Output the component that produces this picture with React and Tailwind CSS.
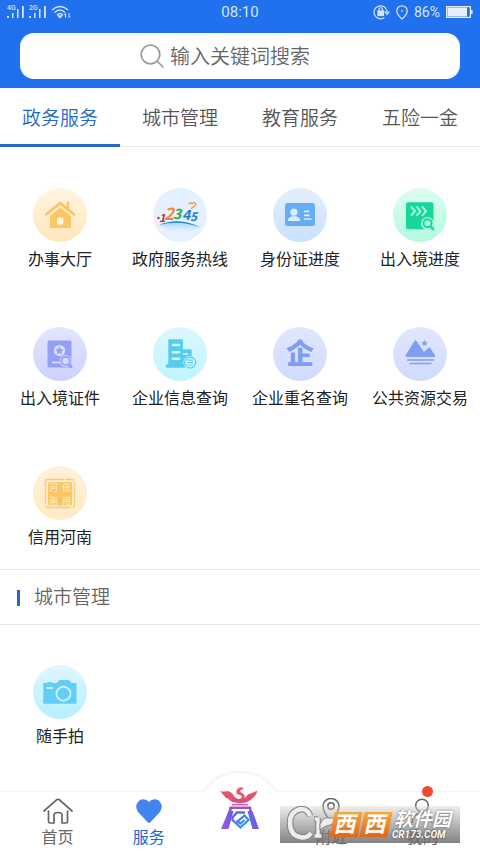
import { useState } from 'react';
import clsx from 'clsx';

const cjk = 'Noto Sans CJK SC, sans-serif';

const HouseIcon = () => (
    <svg viewBox="0 0 54 54" className="w-full h-full" fill="#fbc766" aria-hidden="true">
        <path d="M17 28L27.2 19.5L38 28V38.5Q38 40 36.5 40H18.5Q17 40 17 38.5Z" />
        <path d="M13.3 26.3L27.2 15.2L41 26.3M35 15v5" fill="none" stroke="#fbc766" strokeWidth="2.8" strokeLinecap="round" strokeLinejoin="round" />
        <rect x="24" y="29.5" width="6.4" height="7" rx="1" fill="#fff6e0" />
    </svg>
);

const HotlineIcon = () => (
    <svg viewBox="0 0 54 54" className="w-full h-full" aria-hidden="true">
        <defs>
            <linearGradient id="hill" x1="0" y1="0" x2="0" y2="1">
                <stop offset="0" stopColor="#9ccdf8" />
                <stop offset="1" stopColor="#d9ebfd" stopOpacity="0" />
            </linearGradient>
        </defs>
        <path d="M7 37Q27 29 47 39Q30 52 7 37Z" fill="url(#hill)" />
        <path d="M6 37Q26 28.500 47.500 39.500Q27 31.500 6 37Z" fill="#1d86d2" />
        <g fontFamily={cjk} fontWeight="700" fontStyle="italic">
            <text x="6" y="34" fontSize="11" fill="#d8232f">1</text>
            <text x="11" y="32" fontSize="17" fill="#f08a32">2</text>
            <text x="20" y="31" fontSize="14" fill="#2ba84a">3</text>
            <text x="29" y="31.500" fontSize="14" fill="#1b7fd0">4</text>
            <text x="37" y="33" fontSize="12" fill="#1b7fd0">5</text>
        </g>
        <circle cx="5.500" cy="30" r="1.200" fill="#d8232f" />
        <path d="M35.500 16Q38 13.500 39 16Q41.500 13 43 16Q42 19 38 20.500" fill="none" stroke="#f4a23a" strokeWidth="1.300" />
    </svg>
);

const IdCardIcon = () => (
    <svg viewBox="0 0 54 54" className="w-full h-full" fill="#dcecff" aria-hidden="true">
        <rect x="12" y="15" width="30" height="23" rx="2.500" fill="#66adf5" />
        <circle cx="20.900" cy="24.200" r="3.600" />
        <path d="M14.800 33Q15 29.500 19 28.300H23Q27 29.500 27.200 33Z" />
        <path d="M31 23.300h5.500M31 27.300h5.500M31 31h7.500" stroke="#dcecff" strokeWidth="1.700" />
    </svg>
);

const ProgressIcon = () => (
    <svg viewBox="0 0 54 54" className="w-full h-full" fill="none" aria-hidden="true">
        <rect x="13" y="14.300" width="27.500" height="27" rx="2.500" fill="#17d69c" />
        <path d="M18 18.500l4 4.700l-4 4.700M23.500 18.500l4 4.700l-4 4.700M29 18.500l4 4.700l-4 4.700" stroke="#a8fbe0" strokeWidth="2" />
        <circle cx="34.500" cy="35.500" r="6.500" fill="#a8fbe0" />
        <circle cx="34.500" cy="35.300" r="4" stroke="#17d69c" strokeWidth="2" />
        <path d="M37.500 38.500l3 3" stroke="#17d69c" strokeWidth="2" strokeLinecap="round" />
    </svg>
);

const PassportIcon = () => (
    <svg viewBox="0 0 54 54" className="w-full h-full" fill="none" aria-hidden="true">
        <rect x="14.500" y="13.500" width="24" height="27" rx="1.500" fill="#949ff6" />
        <circle cx="26.500" cy="23.500" r="5.600" fill="#dfe2ff" />
        <path d="M26.500 19.300l1.300 2.700l3 .4l-2.200 2.100l.5 3l-2.600-1.500l-2.600 1.500l.5-3l-2.200-2.100l3-.4z" fill="#949ff6" />
        <path d="M19 35.500h9" stroke="#dfe2ff" strokeWidth="1.600" />
        <circle cx="32.700" cy="34" r="6" fill="#d5d8ff" />
        <circle cx="32.700" cy="34" r="4.200" stroke="#949ff6" strokeWidth="1.800" />
        <path d="M35.500 37l3 3.300" stroke="#949ff6" strokeWidth="2.200" strokeLinecap="round" />
    </svg>
);

const CompanyIcon = () => (
    <svg viewBox="0 0 54 54" className="w-full h-full" fill="#57cdee" aria-hidden="true">
        <path d="M16.500 12.300H28.700Q30 12.300 30 13.500V22.300H37.500Q38.700 22.300 38.700 23.500V37.500H42V40.700H13V38.500Q13 37.300 14.500 37.300H15.300V13.500Q15.300 12.300 16.500 12.300Z" />
        <path d="M20 18h6M20 25.300h6M20 31.700h6" stroke="#d8f8ff" strokeWidth="2.600" strokeLinecap="round" />
        <path d="M30 27h5" stroke="#d8f8ff" strokeWidth="1.600" />
        <circle cx="37.200" cy="35.500" r="6.800" fill="#d8f8ff" />
        <circle cx="37.200" cy="35.500" r="5.500" fill="#d8f8ff" stroke="#57cdee" strokeWidth="1.300" />
        <path d="M34.300 33.200h5.800M34.300 35.600h5.800M34.300 38h5.800" stroke="#57cdee" strokeWidth="1.200" />
    </svg>
);

const NameIcon = () => (
    <svg viewBox="0 0 54 54" className="w-full h-full" aria-hidden="true">
        <text x="27" y="37" textAnchor="middle" fontFamily={cjk} fontWeight="900" fontSize="28" fill="#7e9df2">企</text>
    </svg>
);

const MountainIcon = () => (
    <svg viewBox="0 0 54 54" className="w-full h-full" fill="#7f9ff3" aria-hidden="true">
        <path d="M12.700 28L21.500 14Q22.500 12.500 23.500 14L31 25L35.300 21Q36.500 20 37.500 21.500L42 28V30H12.700Z" />
        <path d="M31.500 12.800l1 2.100l2.300.3l-1.700 1.600l.4 2.300l-2-1.100l-2 1.100l.4-2.300l-1.700-1.600l2.300-.3z" />
        <path d="M14 33h27M16.500 36.500h22" stroke="#7f9ff3" strokeWidth="1.500" />
    </svg>
);

const SealIcon = () => (
    <svg viewBox="0 0 54 54" className="w-full h-full" aria-hidden="true">
        <rect x="12.500" y="13.500" width="29" height="28" rx="2.500" fill="none" stroke="#fbc976" strokeWidth="1.400" strokeDasharray="16 1 9 2" />
        <rect x="15" y="16" width="24" height="23.500" rx="1.500" fill="#fbc667" />
        <g fontFamily={cjk} fontWeight="500" fontSize="9" fill="#ffeac0">
            <text x="29" y="25">信</text>
            <text x="29" y="38">用</text>
            <text x="16" y="25">河</text>
            <text x="16" y="38">南</text>
        </g>
    </svg>
);

const CameraIcon = () => (
    <svg viewBox="0 0 54 54" className="w-full h-full" fill="#62cdf5" aria-hidden="true">
        <path d="M10.300 18H14.500V17H19V18H23.500L26.500 15H36L38.500 18H43.500V38.700H10.300Z" />
        <circle cx="30.500" cy="28.700" r="7" fill="none" stroke="#c9f2ff" strokeWidth="1.900" />
        <path d="M13.500 23h6.500" stroke="#c9f2ff" strokeWidth="1.900" />
    </svg>
);

const services = [
    { name: '办事大厅', icon: HouseIcon, bg: 'from-[#fff5e2] to-[#ffe6ba]' },
    { name: '政府服务热线', icon: HotlineIcon, bg: 'from-[#e3f0fe] to-[#e6f2fe]' },
    { name: '身份证进度', icon: IdCardIcon, bg: 'from-[#e4effd] to-[#c9e0ff]' },
    { name: '出入境进度', icon: ProgressIcon, bg: 'from-[#defcf0] to-[#b0fbdd]' },
    { name: '出入境证件', icon: PassportIcon, bg: 'from-[#e2e6fc] to-[#ced1ff]' },
    { name: '企业信息查询', icon: CompanyIcon, bg: 'from-[#dbf8fd] to-[#c0f3ff]' },
    { name: '企业重名查询', icon: NameIcon, bg: 'from-[#e2e7fc] to-[#cfdaff]' },
    { name: '公共资源交易', icon: MountainIcon, bg: 'from-[#e2e7fc] to-[#cfdaff]' },
    { name: '信用河南', icon: SealIcon, bg: 'from-[#fff1da] to-[#ffebc4]' },
];

const cityServices = [
    { name: '随手拍', icon: CameraIcon, bg: 'from-[#dff6ff] to-[#b5f0ff]' },
];

const tabs = ['政务服务', '城市管理', '教育服务', '五险一金'];

function Signal({ label }) {
    return (
        <svg viewBox="0 0 18 14" className="w-[18px] h-[14px]" fill="#d5e5ff" aria-hidden="true">
            <text x="0" y="5" fontFamily="Roboto, sans-serif" fontSize="7" fontWeight="500">{label}</text>
            <path d="M0 11h2v2H0zM5 8h1.500v5H5zM10 4h1.500v9H10zM15 1h1.800v12H15z" />
        </svg>
    );
}

function StatusBar() {
    return (
        <div className="grid grid-cols-3 items-center h-6 px-[7px] text-[#d5e5ff]">
            <div className="flex items-center gap-1">
                <Signal label="4G" />
                <Signal label="2G" />
                <svg viewBox="0 0 20 14" className="w-5 h-[14px]" fill="none" stroke="currentColor" strokeWidth="1.500" aria-hidden="true">
                    <path d="M1 5Q9 -2 17 5M3.500 7.500Q9 2.500 14 7.500M6 10Q9 7 12 10" />
                    <path d="M7.500 11L9 12.500L10.500 11Z" fill="currentColor" />
                    <path d="M14.500 13V8.500l-1.200 1.500M18 8v4.500l1.200-1.500" strokeWidth="1" />
                </svg>
            </div>
            <span className="text-center text-[15px] leading-6">08:10</span>
            <div className="flex items-center justify-end gap-[6px]">
                <svg viewBox="0 0 17 16" className="w-[17px] h-4" fill="none" stroke="currentColor" strokeWidth="1.200" aria-hidden="true">
                    <path d="M11.500 13.500A6.500 6.500 0 1 1 14 7.500M12 8l2 2.500L16 8Z" />
                    <rect x="5" y="7" width="5.500" height="4.500" fill="currentColor" />
                    <path d="M6 7V5.500a1.700 1.700 0 0 1 3.500 0V7" />
                </svg>
                <svg viewBox="0 0 12 15" className="w-3 h-[15px]" fill="none" stroke="currentColor" strokeWidth="1.300" aria-hidden="true">
                    <path d="M6 14Q.8 9.500.8 6a5.200 5.200 0 0 1 10.400 0Q11.200 9.500 6 14Z" />
                    <circle cx="6" cy="6" r=".8" strokeWidth=".6" />
                </svg>
                <span className="text-[14px] leading-6">86%</span>
                <svg viewBox="0 0 27 12" className="w-[27px] h-3" fill="none" aria-hidden="true">
                    <rect x=".6" y=".6" width="23.800" height="10.800" stroke="#e6eefc" strokeWidth="1.200" />
                    <rect x="1.500" y="1.500" width="19.500" height="9" fill="#e6eefc" />
                    <path d="M25.800 4v4" stroke="#e6eefc" strokeWidth="1.500" />
                </svg>
            </div>
        </div>
    );
}

function ServiceGrid({ items }) {
    return (
        <div className="grid grid-cols-4">
            {items.map(({ name, icon: Icon, bg }) => (
                <button key={name} className="flex flex-col items-center pt-10 pb-[15px] text-[#222]">
                    <span className={clsx('w-[54px] h-[54px] rounded-full bg-linear-to-b', bg)}>
                        <Icon />
                    </span>
                    <span className="mt-[6px] text-base leading-6 whitespace-nowrap">{name}</span>
                </button>
            ))}
        </div>
    );
}

const navItem = 'flex flex-col items-center pt-[6px]';

function BottomNav() {
    return (
        <nav className="relative mt-auto h-[62px] grid grid-cols-5 px-3 bg-white border-t border-[#f3f3f3] text-[#666]">
            <a href="#home" className={navItem}>
                <svg viewBox="0 0 30 26" className="w-[30px] h-[26px]" fill="none" stroke="currentColor" strokeWidth="1.700" strokeLinecap="round" strokeLinejoin="round" aria-hidden="true">
                    <path d="M1 13L13.500 1.800Q15 .8 16.500 1.800L29 13M5.500 13V23.500Q5.500 25 7 25H11V17Q11 14.500 15 14.500Q19 14.500 19 17V25H23Q24.500 25 24.500 23.500V13" />
                </svg>
                <span className="mt-[2px] text-base leading-6">首页</span>
            </a>
            <a href="#service" className={clsx(navItem, 'text-[#2264c8]')}>
                <svg viewBox="0 0 26 26" className="w-[26px] h-[26px]" fill="#4285ee" aria-hidden="true">
                    <path d="M13 25Q12 25 10 22.500L2 14Q-1 9.500 1 5.500Q3 1.200 7.500 1.200Q11 1.200 13 4Q15 1.200 18.500 1.200Q23 1.200 25 5.500Q27 9.500 24 14L16 22.500Q14 25 13 25Z" />
                </svg>
                <span className="mt-[2px] text-base leading-6">服务</span>
            </a>
            <a href="#main" aria-label="主页" className="relative">
                {/* clip keeps only the part of the ring that rises above the bar */}
                <span className="absolute bottom-full left-1/2 -translate-x-1/2 w-[92px] h-[22px] -mb-px overflow-hidden">
                    <span className="block w-[92px] h-[92px] rounded-full bg-white border-2 border-[#f5f5f5]"></span>
                </span>
                <svg viewBox="0 0 40 44" className="absolute left-1/2 -translate-x-1/2 -top-[6px] w-10 h-11" fill="none" aria-hidden="true">
                    <defs>
                        <linearGradient id="ding" x1="0" y1="0" x2="1" y2="0">
                            <stop offset="0" stopColor="#a855e6" />
                            <stop offset="1" stopColor="#5f5be8" />
                        </linearGradient>
                        <linearGradient id="swirl" x1="0" y1="0" x2="1" y2="1">
                            <stop offset="0" stopColor="#5a5ee6" />
                            <stop offset="1" stopColor="#33a4e8" />
                        </linearGradient>
                        <linearGradient id="bird" x1="0" y1="0" x2="0" y2="1">
                            <stop offset="0" stopColor="#f0605a" />
                            <stop offset="1" stopColor="#d64c80" />
                        </linearGradient>
                    </defs>
                    <path d="M.5 5Q4 6 8 5Q12 6 14 10Q16.500 13.500 19.500 13Q23 12 21.500 10Q20 8 17.500 8.500Q15.500 6 17 3.500Q19 .8 22.500 1.500L24 3Q21 3 20 5Q20 6.500 23 7.500Q25.500 9.500 24.500 12.500Q27 9 28.500 8Q31 7.500 33 6.500L37.500 4.500Q36.500 9 34 11Q31 14 28 15.500Q24 17.500 18 17Q11 16.500 8 12.500Q5 12 4 9.500Q2 8 .5 5Z" fill="url(#bird)" />
                    <path d="M12 18.700H28" stroke="#cf4f9c" strokeWidth="1.300" />
                    <path d="M9.500 20.500H31L32 26H29.500L28.800 23H12L11 26H8.500Z" fill="#a24fd0" />
                    <path d="M8.500 25H13.500L8.500 43H1Z" fill="url(#ding)" />
                    <path d="M27.500 25H32.500L39 43H32.500Z" fill="#6a62e8" />
                    <path d="M25 26.500H17L12.500 31.500V34L20.500 41.500L28.500 34L24.500 29.500L17.500 35.500L20.500 37.500L24.500 34" stroke="url(#swirl)" strokeWidth="2.300" />
                </svg>
            </a>
            <a href="#nearby" className={navItem}>
                <svg viewBox="0 0 26 26" className="w-[26px] h-[26px]" fill="none" stroke="currentColor" strokeWidth="1.500" aria-hidden="true">
                    <path d="M13 24Q5 14 5 8.300a8 7.800 0 0 1 16 0Q21 14 13 24Z" />
                    <circle cx="13" cy="8" r="3.200" />
                </svg>
                <span className="mt-[2px] text-base leading-6">附近</span>
            </a>
            <a href="#mine" className={clsx(navItem, 'relative')}>
                <svg viewBox="0 0 26 26" className="w-[26px] h-[26px]" fill="none" stroke="currentColor" strokeWidth="1.500" aria-hidden="true">
                    <circle cx="13" cy="7.500" r="6.300" />
                    <path d="M3 25Q4 15 13 15Q22 15 23 25" />
                </svg>
                <span className="mt-[2px] text-base leading-6">我的</span>
                <span className="absolute left-1/2 -top-[6px] w-[11px] h-[11px] rounded-full bg-[#f04a35]"></span>
            </a>

            <div className="absolute right-5 bottom-[10px] w-[180px] h-[37px] bg-linear-to-b from-[#d8d8d8]/40 to-[#6c6c6c]/85">
                <svg viewBox="0 0 58 38" className="absolute left-[6px] bottom-0 w-[58px] h-[38px]" fill="none" aria-hidden="true">
                    <g stroke="#808080">
                        <path d="M24 11Q22 4 15 4Q4 6 4 18Q4 31 16 32.500Q22 32.500 25 28" strokeWidth="6.500" />
                        <path d="M32 13V31M28 31H36M28 14H32" strokeWidth="5.500" />
                    </g>
                    <g stroke="#ededed">
                        <path d="M24 11Q22 4 15 4Q4 6 4 18Q4 31 16 32.500Q22 32.500 25 28" strokeWidth="4.500" />
                        <path d="M32 13V31M28.500 31H35.500M28.500 14H32" strokeWidth="3.500" />
                    </g>
                    <path d="M34 19Q38 11 43 13Q47 14 50 11Q50 18 44 20Q38 21 34 25Z" fill="#ededed" stroke="#808080" />
                </svg>
                <span className="absolute left-[52px] top-[6px] flex gap-[2px] -skew-x-12 text-white text-[22px] leading-[25px] font-bold text-center">
                    <span className="w-7 h-[25px] bg-linear-to-b from-[#f6a83a] to-[#e0651a]">西</span>
                    <span className="w-7 h-[25px] bg-linear-to-b from-[#f6a83a] to-[#e0651a]">西</span>
                </span>
                <span className="absolute left-[114px] top-[4px] text-white text-[19px] leading-[19px] font-bold italic whitespace-nowrap [text-shadow:0_0_2px_#555]">软件园</span>
                <span className="absolute left-[112px] top-[24px] text-white text-[10px] leading-[10px] font-bold italic [text-shadow:0_0_2px_#333]">CR173.COM</span>
            </div>
        </nav>
    );
}

export default function App() {
    const [active, setActive] = useState('政务服务');

    return (
        <div className="min-h-screen flex flex-col bg-white font-['Roboto','Noto_Sans_CJK_SC',sans-serif]">
            <header className="bg-[#2170ee] pb-[9px]">
                <StatusBar />
                <label className="mx-5 mt-[9px] pr-7 h-[46px] flex items-center justify-center gap-[6px] rounded-[14px] bg-white">
                    <svg viewBox="0 0 24 24" className="w-6 h-6" fill="none" stroke="#999" strokeWidth="1.700" strokeLinecap="round" aria-hidden="true">
                        <circle cx="10.500" cy="10.500" r="9.300" />
                        <path d="M17.500 17.500L23 23" />
                    </svg>
                    <input
                        type="text"
                        aria-label="搜索"
                        placeholder="输入关键词搜索"
                        className="w-[142px] shrink-0 pt-[2px] text-[20px] leading-7 font-[350] outline-none placeholder:text-[#666] placeholder:opacity-100"
                    />
                </label>
            </header>

            <div className="grid grid-cols-4 border-b border-[#ebebeb]">
                {tabs.map((tab) => (
                    <button
                        key={tab}
                        onClick={() => setActive(tab)}
                        className={clsx(
                            'h-[59px] -mb-px pt-[6px] border-b-3 text-[19px] font-[350]',
                            active === tab ? 'border-[#2468c8] text-[#2468c8]' : 'border-transparent text-[#555]'
                        )}
                    >
                        {tab}
                    </button>
                ))}
            </div>

            <main>
                <section className="pt-px pb-1">
                    <ServiceGrid items={services} />
                </section>
                <section>
                    <h2 className="flex items-center gap-[14px] h-14 pt-[2px] pl-[17px] border-y border-[#e8e8e8] text-[19px] font-[350] text-[#666]">
                        <span className="w-[3px] h-4 bg-[#2468c8]"></span>
                        城市管理
                    </h2>
                    <ServiceGrid items={cityServices} />
                </section>
            </main>

            <BottomNav />
        </div>
    );
}
